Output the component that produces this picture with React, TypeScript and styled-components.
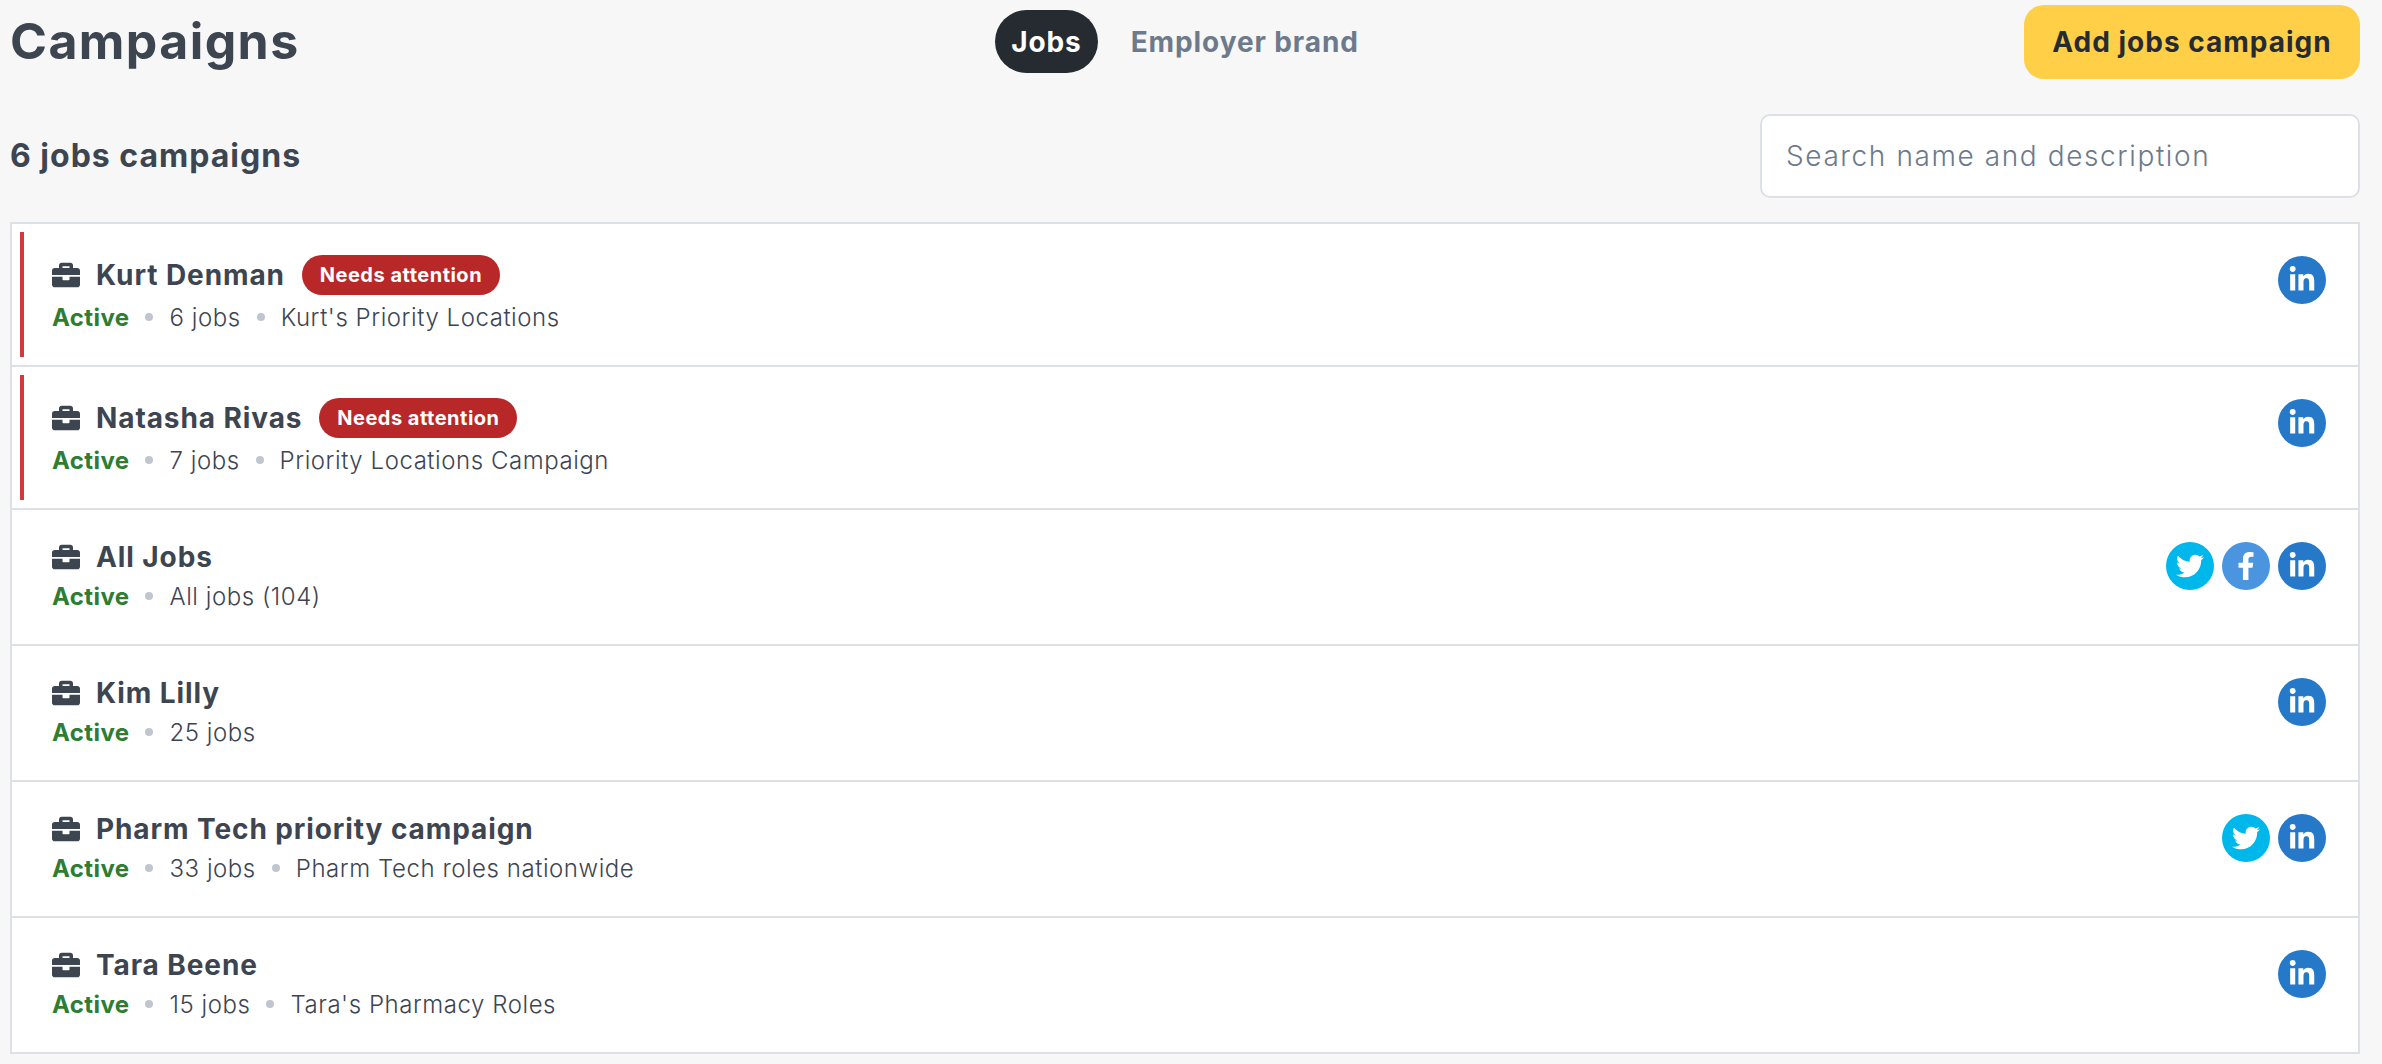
import React from "react";
import styled, { createGlobalStyle } from "styled-components";
import { FaBriefcase, FaFacebookF, FaLinkedinIn, FaTwitter } from "react-icons/fa";

const Global = createGlobalStyle`
  html, body { margin: 0; padding: 0; background: #f7f7f7; }
  body { font-family: Inter, "Open Sans", "Liberation Sans", sans-serif; color: #3d4551; }
  * { box-sizing: border-box; }
`;

const Page = styled.div`
  padding: 5px 22px 0 10px;
  height: 1064px;
  overflow: hidden;
`;

const Header = styled.header`
  display: grid;
  grid-template-columns: 1fr auto 1fr;
  align-items: center;
  height: 74px;
`;

const Title = styled.h1`
  margin: -2px 0 0;
  font-size: 50px;
  font-weight: 650;
  line-height: 70px;
  letter-spacing: 1.4px;
  color: #3d4551;
`;

const Tabs = styled.nav`
  display: flex;
  align-items: center;
  gap: 17px;
  margin-top: -1px;
`;

const Tab = styled.div<{ $active?: boolean }>`
  height: 63px;
  padding: 0 16px;
  display: flex;
  align-items: center;
  border-radius: 32px;
  font-size: 28px;
  font-weight: 650;
  letter-spacing: 0.9px;
  background: ${(p) => (p.$active ? "#262b31" : "transparent")};
  color: ${(p) => (p.$active ? "#ffffff" : "#6d7a8b")};
`;

const AddButton = styled.button`
  justify-self: end;
  width: 336px;
  height: 74px;
  border: 0;
  border-radius: 20px;
  background: #ffcf48;
  color: #262b31;
  font-family: inherit;
  font-size: 28px;
  font-weight: 650;
  letter-spacing: 1px;
`;

const Toolbar = styled.div`
  display: flex;
  justify-content: space-between;
  align-items: center;
  margin-top: 35px;
`;

const Count = styled.h2`
  margin: -2px 0 0;
  font-size: 32px;
  font-weight: 650;
  letter-spacing: 1px;
  color: #3d4551;
`;

const Search = styled.input`
  width: 600px;
  height: 84px;
  padding: 0 24px;
  border: 2px solid #dde1e6;
  border-radius: 10px;
  background: #fff;
  font-family: inherit;
  font-size: 28px;
  font-weight: 300;
  letter-spacing: 1.6px;
  &::placeholder { color: #6d7a8b; opacity: 1; }
`;

const List = styled.div`
  margin-top: 24px;
  background: #fff;
  border: 2px solid #dde1e6;
  border-bottom: 0;
`;

const Row = styled.div`
  padding: 8px;
  border-bottom: 2px solid #dde1e6;
`;

const RowInner = styled.div<{ $alert?: boolean }>`
  display: flex;
  justify-content: space-between;
  align-items: flex-start;
  padding: 18px 24px 22px 28px;
  border-left: 4px solid ${(p) => (p.$alert ? "#d13a3a" : "transparent")};
`;

const Info = styled.div`
  display: flex;
  flex-direction: column;
`;

const TitleLine = styled.div`
  display: flex;
  align-items: center;
  min-height: 42px;
`;

const Case = styled(FaBriefcase)`
  width: 28px;
  height: 28px;
  color: #3d4551;
  margin-right: 16px;
`;

const Name = styled.span`
  font-size: 28px;
  font-weight: 650;
  line-height: 42px;
  letter-spacing: 0.9px;
`;

const Badge = styled.span`
  display: inline-flex;
  align-items: center;
  justify-content: center;
  width: 198px;
  height: 40px;
  margin: 5px 0 4px 17px;
  border-radius: 20px;
  background: #b92828;
  color: #fff;
  font-size: 20px;
  font-weight: 650;
  letter-spacing: 0.5px;
`;

const Meta = styled.div`
  display: flex;
  align-items: center;
  height: 36px;
  font-size: 24px;
  font-weight: 300;
  letter-spacing: 0.55px;
  color: #3d4551;
`;

const Status = styled.span`
  font-weight: 650;
  letter-spacing: 0.4px;
  color: #2e7d32;
`;

const Dot = styled.span`
  width: 8px;
  height: 8px;
  margin: 0 16px;
  border-radius: 50%;
  background: #c0c6d0;
`;

const Socials = styled.div`
  display: flex;
  gap: 8px;
  margin-top: 6px;
`;

const Social = styled.span<{ $bg: string }>`
  width: 48px;
  height: 48px;
  border-radius: 50%;
  display: flex;
  align-items: center;
  justify-content: center;
  background: ${(p) => p.$bg};
  color: #fff;
  font-size: 28px;
`;

type Net = "twitter" | "facebook" | "linkedin";

const nets: Record<Net, { bg: string; icon: React.ReactNode }> = {
  twitter: { bg: "#00b7ec", icon: <FaTwitter /> },
  facebook: { bg: "#4a94e0", icon: <FaFacebookF /> },
  linkedin: { bg: "#2678c9", icon: <FaLinkedinIn /> },
};

const campaigns: { name: string; alert?: boolean; jobs: string; desc?: string; nets: Net[] }[] = [
  { name: "Kurt Denman", alert: true, jobs: "6 jobs", desc: "Kurt's Priority Locations", nets: ["linkedin"] },
  { name: "Natasha Rivas", alert: true, jobs: "7 jobs", desc: "Priority Locations Campaign", nets: ["linkedin"] },
  { name: "All Jobs", jobs: "All jobs (104)", nets: ["twitter", "facebook", "linkedin"] },
  { name: "Kim Lilly", jobs: "25 jobs", nets: ["linkedin"] },
  { name: "Pharm Tech priority campaign", jobs: "33 jobs", desc: "Pharm Tech roles nationwide", nets: ["twitter", "linkedin"] },
  { name: "Tara Beene", jobs: "15 jobs", desc: "Tara's Pharmacy Roles", nets: ["linkedin"] },
];

export default function App() {
  return (
    <Page>
      <Global />
      <Header>
        <Title>Campaigns</Title>
        <Tabs>
          <Tab $active>Jobs</Tab>
          <Tab>Employer brand</Tab>
        </Tabs>
        <AddButton>Add jobs campaign</AddButton>
      </Header>
      <Toolbar>
        <Count>6 jobs campaigns</Count>
        <Search placeholder="Search name and description" />
      </Toolbar>
      <List>
        {campaigns.map((c) => (
          <Row key={c.name}>
            <RowInner $alert={c.alert}>
              <Info>
                <TitleLine>
                  <Case />
                  <Name>{c.name}</Name>
                  {c.alert && <Badge>Needs attention</Badge>}
                </TitleLine>
                <Meta>
                  <Status>Active</Status>
                  <Dot />
                  <span>{c.jobs}</span>
                  {c.desc && <Dot />}
                  {c.desc && <span>{c.desc}</span>}
                </Meta>
              </Info>
              <Socials>
                {c.nets.map((n) => (
                  <Social key={n} $bg={nets[n].bg}>{nets[n].icon}</Social>
                ))}
              </Socials>
            </RowInner>
          </Row>
        ))}
      </List>
    </Page>
  );
}
